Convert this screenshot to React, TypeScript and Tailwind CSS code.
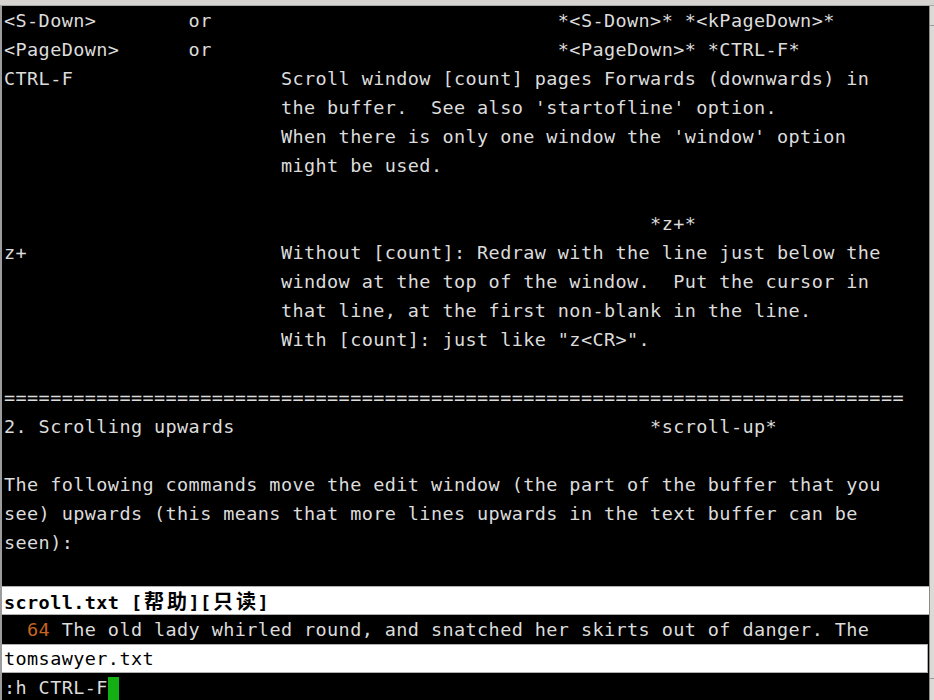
import React from 'react';

const pad = (n: number) => ' '.repeat(n);

const lines: string[] = [
  '<S-Down>        or' + pad(30) + '*<S-Down>* *<kPageDown>*',
  '<PageDown>      or' + pad(30) + '*<PageDown>* *CTRL-F*',
  'CTRL-F' + pad(18) + 'Scroll window [count] pages Forwards (downwards) in',
  pad(24) + "the buffer.  See also 'startofline' option.",
  pad(24) + "When there is only one window the 'window' option",
  pad(24) + 'might be used.',
  '',
  pad(56) + '*z+*',
  'z+' + pad(22) + 'Without [count]: Redraw with the line just below the',
  pad(24) + 'window at the top of the window.  Put the cursor in',
  pad(24) + 'that line, at the first non-blank in the line.',
  pad(24) + 'With [count]: just like "z<CR>".',
  '',
  '='.repeat(78),
  '2. Scrolling upwards' + pad(36) + '*scroll-up*',
  '',
  'The following commands move the edit window (the part of the buffer that you',
  'see) upwards (this means that more lines upwards in the text buffer can be',
  'seen):',
  '',
];

function Wide({ ch }: { ch: string }) {
  return (
    <span className="inline-block w-[23px] text-center tracking-normal text-[20px] font-['Noto_Sans_CJK_SC',sans-serif]">
      {ch}
    </span>
  );
}

export default function App() {
  return (
    <div className="w-[934px] h-[700px] overflow-hidden flex flex-col bg-[#d6d4d0]">
      <div className="h-[6px] shrink-0 border-b border-[#a8a8a8]" />
      <div className="flex flex-1 min-h-0">
        <div className="w-[2px] bg-[#9c9c9c]" />
        <div className="flex-1 bg-black text-[#dcdcdc] font-['DejaVu_Sans_Mono',monospace] text-[18.5px] tracking-[0.4px] overflow-hidden">
          {lines.map((l, i) => (
            <div key={i} className="h-[29px] leading-[29px] whitespace-pre pl-[2px]">
              {l}
            </div>
          ))}
          <div className="h-[29px] leading-[27px] whitespace-pre pl-[2px] bg-white text-black font-bold border-y border-[#b0b0b0]">
            scroll.txt [<Wide ch="帮" /><Wide ch="助" />][<Wide ch="只" /><Wide ch="读" />]
          </div>
          <div className="h-[29px] leading-[29px] whitespace-pre pl-[2px]">
            {'  '}<span className="text-[#c8641e]">64</span>{' The old lady whirled round, and snatched her skirts out of danger. The'}
          </div>
          <div className="h-[29px] leading-[27px] whitespace-pre pl-[2px] bg-white text-black border-y border-r border-[#b0b0b0] mr-[1px]">
            tomsawyer.txt
          </div>
          <div className="h-[29px] leading-[29px] whitespace-pre pl-[2px] flex items-center">
            <span>:h CTRL-F</span>
            <span className="inline-block w-[11px] h-[25px] mt-[4px] bg-[#12b012]" />
          </div>
        </div>
        <div className="w-[5px] flex flex-col border-l border-[#8c8c8c] bg-[#dcdad6]">
          <div className="h-[20px] border-b border-[#9a9a9a]" />
          <div className="flex-1" />
          <div className="h-[22px] border-t border-[#9a9a9a]" />
        </div>
      </div>
    </div>
  );
}
